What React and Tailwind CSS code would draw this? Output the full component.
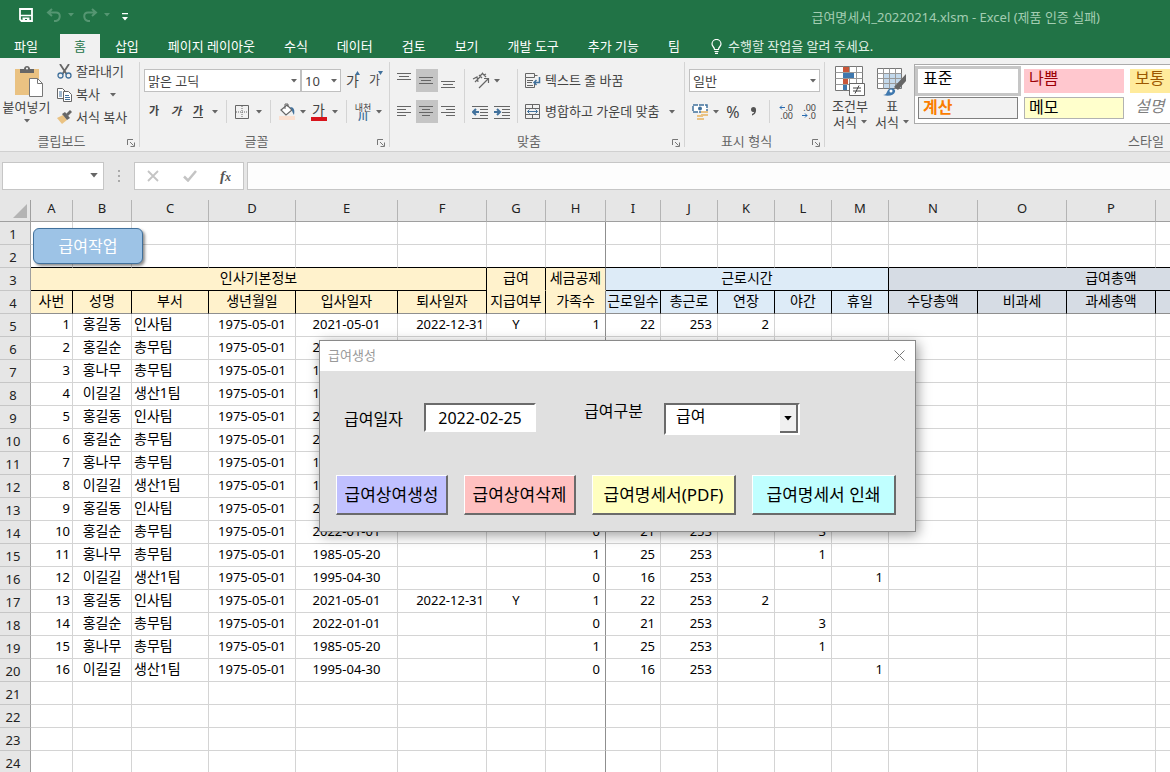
import React from 'react';

const tabs = ['삽입', '페이지 레이아웃', '수식', '데이터', '검토', '보기', '개발 도구', '추가 기능', '팀'];

const columns = [
  { name: 'A', width: 42 },
  { name: 'B', width: 59 },
  { name: 'C', width: 77 },
  { name: 'D', width: 87 },
  { name: 'E', width: 102 },
  { name: 'F', width: 89 },
  { name: 'G', width: 59 },
  { name: 'H', width: 60 },
  { name: 'I', width: 55 },
  { name: 'J', width: 57 },
  { name: 'K', width: 57 },
  { name: 'L', width: 57 },
  { name: 'M', width: 57 },
  { name: 'N', width: 89 },
  { name: 'O', width: 89 },
  { name: 'P', width: 89 },
  { name: 'Q', width: 89 },
  { name: 'R', width: 89 }
];

const people = [
  { name: '홍길동', team: '인사팀', joined: '2021-05-01', left: '2022-12-31', paid: 'Y', family: 1, days: 22, over: 2 },
  { name: '홍길순', team: '총무팀', joined: '2022-01-01', family: 0, days: 21, night: 3 },
  { name: '홍나무', team: '총무팀', joined: '1985-05-20', family: 1, days: 25, night: 1 },
  { name: '이길길', team: '생산1팀', joined: '1995-04-30', family: 0, days: 16, holiday: 1 }
];

const employees = Array.from({ length: 16 }, (_, i) => ({ id: i + 1, ...people[i % 4] }));

const subHeads = [
  { text: '사번', style: 'bg-[#fff2cc] border-r-black' },
  { text: '성명', style: 'bg-[#fff2cc] border-r-black' },
  { text: '부서', style: 'bg-[#fff2cc] border-r-black' },
  { text: '생년월일', style: 'bg-[#fff2cc] border-r-black' },
  { text: '입사일자', style: 'bg-[#fff2cc] border-r-black' },
  { text: '퇴사일자', style: 'bg-[#fff2cc] border-r-black' },
  { text: '지급여부', style: 'bg-[#fff2cc] border-r-black' },
  { text: '가족수', style: 'bg-[#fff2cc] border-r-[#7f7f7f]' },
  { text: '근로일수', style: 'bg-[#ddebf7] border-r-black' },
  { text: '총근로', style: 'bg-[#ddebf7] border-r-black' },
  { text: '연장', style: 'bg-[#ddebf7] border-r-black' },
  { text: '야간', style: 'bg-[#ddebf7] border-r-black' },
  { text: '휴일', style: 'bg-[#ddebf7] border-r-black' },
  { text: '수당총액', style: 'bg-[#d6dce4] border-r-black' },
  { text: '비과세', style: 'bg-[#d6dce4] border-r-black' },
  { text: '과세총액', style: 'bg-[#d6dce4] border-r-black' },
  { text: '', style: 'bg-[#d6dce4] border-r-black' },
  { text: '', style: 'bg-[#d6dce4] border-r-black' }
];

const Caret = ({ className = '' }) => (
  <svg width="6" height="4" viewBox="0 0 6 4" className={`shrink-0 fill-[#666] ${className}`}>
    <path d="M0 0h6L3 3.5z" />
  </svg>
);

const Separator = ({ className = '' }) => <div className={`w-px shrink-0 bg-[#d4d4d4] ${className}`}></div>;

const Launcher = () => (
  <svg width="8" height="8" viewBox="0 0 8 8" fill="none" stroke="#777">
    <path d="M.5 6V.5H6M3 3l3.500 3.500M7.500 3.500v4h-4" />
  </svg>
);

const Lines = ({ d, className = '' }) => (
  <svg width="15" height="15" viewBox="0 0 15 15" fill="none" stroke="#666" className={className}>
    <path d={d} />
  </svg>
);

const RibbonGroup = ({ title, className, children }) => (
  <section aria-label={title} className={`flex shrink-0 flex-col pt-1 ${className}`}>
    <div className="h-[70px]">{children}</div>
    <div className="flex h-[17px] items-center">
      <span className="flex-1 text-center text-[13px] leading-4 text-[#666]">{title}</span>
      <button aria-label={`${title} 설정`} className="w-4 pl-1 pt-1"><Launcher /></button>
    </div>
  </section>
);

const Combo = ({ label, value, className }) => (
  <div className={`relative h-[23px] ${className}`}>
    <select aria-label={label} className="block h-full w-full appearance-none border border-[#c0c0c0] bg-white pl-[3px] text-[13px] leading-5 text-[#444]">
      <option>{value}</option>
    </select>
    <Caret className="pointer-events-none absolute right-1 top-[10px]" />
  </div>
);

const TitleBar = () => (
  <header className="bg-[#217346] text-white">
    <div className="flex h-[34px] items-center">
      <button aria-label="저장" className="ml-[18px]">
        <svg width="16" height="16" viewBox="0 0 16 16" className="mb-1">
          <path d="M2 2h12v12H3.500L2 12.500z" fill="none" stroke="#fff" strokeWidth="1.800" />
          <path d="M2 8.500h12" fill="none" stroke="#fff" strokeWidth="1.500" />
          <path d="M4.500 10.500h7V14h-2.500v-2H7v2H4.500z" fill="#fff" />
        </svg>
      </button>
      <button aria-label="실행 취소" className="ml-3 mb-1 flex items-center gap-1.5">
        <svg width="16" height="14" viewBox="0 0 16 14" fill="none" stroke="#559672" strokeWidth="2">
          <path d="M6 1L2 4.500 6 8M2.500 4.500H10c5 0 5 7 0 8.500H8" />
        </svg>
        <Caret className="fill-[#559672]" />
      </button>
      <button aria-label="다시 실행" className="ml-2 mb-1 flex items-center gap-1.5">
        <svg width="16" height="14" viewBox="0 0 16 14" fill="none" stroke="#559672" strokeWidth="2">
          <path d="M10 1l4 3.500L10 8M13.500 4.500H6c-5 0-5 7 0 8.500h2" />
        </svg>
        <Caret className="fill-[#559672]" />
      </button>
      <button aria-label="빠른 실행 도구 모음" className="ml-3">
        <svg width="6" height="8" viewBox="0 0 6 8" fill="#fff">
          <path d="M0 0h6v1.300H0zM0 4h6L3 7.500z" />
        </svg>
      </button>
      <h1 className="ml-auto mr-[70px] text-[13px] leading-5 text-[#a3cdb2]">급여명세서_20220214.xlsm - Excel (제품 인증 실패)</h1>
    </div>
    <nav className="flex h-6 gap-px text-[13px] leading-5 whitespace-nowrap">
      <button className="mr-[7px] px-[14px]">파일</button>
      <button className="bg-[#f1f1f1] px-[14px] text-[#217346]">홈</button>
      {tabs.map(tab => (
        <button key={tab} className="px-[14px]">{tab}</button>
      ))}
      <button className="flex items-center gap-1.5 pl-4 text-[#e0f0e5]">
        <svg width="11" height="15" viewBox="0 0 11 15" fill="none" stroke="#fff" strokeWidth="1.200">
          <path d="M3.500 10.500C3.500 8 1 7.500 1 5a4.500 4.500 0 0 1 9 0c0 2.500-2.500 3-2.500 5.500zM3.500 12.500h4M4 14.300h3" />
        </svg>
        수행할 작업을 알려 주세요.
      </button>
    </nav>
  </header>
);

const Clipboard = () => (
  <RibbonGroup title="클립보드" className="w-[139px]">
    <div className="flex">
      <button className="flex w-[53px] flex-col items-center pt-1 text-[13px] leading-5 text-[#444]">
        <svg width="30" height="31" viewBox="0 0 30 31" className="ml-1">
          <path d="M1 3h24v26H1z" fill="#eac282" />
          <path d="M6 3h4c0-4 6-4 6 0h4v4H6z" fill="#666" />
          <circle cx="13" cy="2.500" r="1" fill="#fff" />
          <path d="M15.500 12.500h8l5 5v13h-13z" fill="#fff" stroke="#777" />
          <path d="M23.500 12.500v5h5" fill="none" stroke="#777" />
        </svg>
        붙여넣기
        <Caret className="mt-0.5" />
      </button>
      <div className="ml-1 flex flex-col text-[13px] leading-[23px] text-[#444]">
        <button className="flex h-[23px] -mt-0.5 items-center gap-1">
          <svg width="15" height="15" viewBox="0 0 15 15" fill="none">
            <path d="M3 0l6.500 10M12 0L5.500 10" stroke="#666" strokeWidth="1.800" />
            <circle cx="3.500" cy="11.500" r="2.500" stroke="#41719c" strokeWidth="1.300" />
            <circle cx="11.500" cy="11.500" r="2.500" stroke="#41719c" strokeWidth="1.300" />
          </svg>
          잘라내기
        </button>
        <button className="flex h-[23px] items-center gap-1">
          <svg width="15" height="15" viewBox="0 0 15 15" fill="#fff" stroke="#666">
            <path d="M.5 1.500h5l3 3v7h-8z" />
            <path d="M6.500 4.500h5l3 3v7h-8z" />
            <path d="M2 5h3M2 7h3M2 9h3M8 8.500h4M8 10.500h5M8 12.500h5" stroke="#41719c" />
          </svg>
          복사
          <Caret className="ml-1.5" />
        </button>
        <button className="flex h-[23px] items-center gap-1">
          <svg width="15" height="15" viewBox="0 0 15 15">
            <path d="M0 8l6-3 4 5-5 4z" fill="#eac282" />
            <path d="M5 4l3-2 5 6-3 2z" fill="#666" />
            <path d="M9 4l4-4 2 2-4 4z" fill="#666" />
          </svg>
          서식 복사
        </button>
      </div>
    </div>
  </RibbonGroup>
);

const FontGroup = () => (
  <RibbonGroup title="글꼴" className="w-[249px]">
    <div className="flex items-center pl-1 pt-[7px] text-[#444]">
      <Combo label="글꼴" value="맑은 고딕" className="w-[157px]" />
      <Combo label="글꼴 크기" value="10" className="w-10" />
      <button aria-label="글꼴 크기 크게" className="ml-[5px] flex w-[18px] text-[14px] leading-5">
        가<svg width="5" height="4" viewBox="0 0 5 4" fill="#41719c" className="-ml-1 shrink-0"><path d="M0 4L2.500 0 5 4z" /></svg>
      </button>
      <button aria-label="글꼴 크기 작게" className="ml-[5px] flex w-[18px] text-[12px] leading-5">
        가<svg width="5" height="4" viewBox="0 0 5 4" fill="#41719c" className="-ml-0.5 shrink-0"><path d="M0 0h5L2.500 4z" /></svg>
      </button>
    </div>
    <div className="mt-2 flex h-[23px] items-center pl-[3px] text-[#444]">
      <button className="w-[22px] text-[11px] font-bold">가</button>
      <button className="w-[22px] text-[11px] font-bold italic">가</button>
      <button className="w-[22px] text-[11px] font-bold underline underline-offset-2">가</button>
      <Caret className="ml-[3px]" />
      <Separator className="ml-2 h-[23px]" />
      <button aria-label="테두리" className="ml-2">
        <svg width="14" height="14" viewBox="0 0 14 14" fill="none" stroke="#666">
          <path d="M.5.5h13v13H.5z" />
          <path d="M7 1v12M1 7h12" strokeDasharray="1 1" />
        </svg>
      </button>
      <Caret className="ml-[7px]" />
      <Separator className="ml-2 h-[23px]" />
      <button aria-label="채우기 색" className="ml-2">
        <svg width="17" height="17" viewBox="0 0 17 17">
          <path d="M2 7l6-5 5 5-6 5z" fill="#fff" stroke="#666" strokeWidth="1.200" />
          <path d="M6 6V1h3v3" fill="none" stroke="#666" />
          <path d="M11 4c4 0 5 3 4 8-1-2-2-3-2-5z" fill="#41719c" />
          <path d="M0 13h16v4H0z" fill="#fbe0d0" />
        </svg>
      </button>
      <Caret className="ml-1" />
      <button aria-label="글꼴 색" className="ml-1 flex w-[17px] flex-col items-center text-[14px] leading-[14px]">
        가<span className="h-1 w-4 bg-[#d8141c]"></span>
      </button>
      <Caret className="ml-[5px]" />
      <Separator className="ml-2 h-[23px]" />
      <button aria-label="윗주" className="ml-2 flex w-4 flex-col items-center text-[9px] leading-[9px] whitespace-nowrap">
        내천
        <span className="text-[10px] leading-[9px] font-bold text-[#41719c]">川</span>
      </button>
      <Caret className="ml-[5px]" />
    </div>
  </RibbonGroup>
);

const AlignGroup = () => (
  <RibbonGroup title="맞춤" className="w-[294px]">
    <div className="flex pl-1 pt-[7px] text-[13px] leading-[23px] text-[#444]">
      <div className="grid grid-cols-3 gap-y-2">
        <button aria-label="위쪽 맞춤" className="h-[23px] w-[22px] pl-[3px]"><Lines d="M0 .5h14M2 3.500h10M0 6.500h14" /></button>
        <button aria-label="세로 가운데 맞춤" className="h-[23px] w-[22px] bg-[#c5c5c5] pl-[3px]"><Lines d="M0 4.500h14M2 7.500h10M0 10.500h14" /></button>
        <button aria-label="아래쪽 맞춤" className="h-[23px] w-[22px] pl-[3px]"><Lines d="M0 8.500h14M2 11.500h10M0 14.500h14" /></button>
        <button aria-label="왼쪽 맞춤" className="h-[23px] w-[22px] pl-[3px]"><Lines d="M0 2.500h14M0 5.500h9M0 8.500h14M0 11.500h9" /></button>
        <button aria-label="가운데 맞춤" className="h-[23px] w-[22px] bg-[#c5c5c5] pl-[3px]"><Lines d="M0 2.500h14M3 5.500h8M0 8.500h14M3 11.500h8" /></button>
        <button aria-label="오른쪽 맞춤" className="h-[23px] w-[22px] pl-[3px]"><Lines d="M0 2.500h14M5 5.500h9M0 8.500h14M5 11.500h9" /></button>
      </div>
      <Separator className="ml-1" />
      <div className="ml-[7px] flex w-[45px] flex-col gap-2">
        <button aria-label="방향" className="flex h-[23px] items-center gap-1">
          <svg width="18" height="17" viewBox="0 0 18 17" fill="none" stroke="#666" strokeWidth="1.200">
            <path d="M7 16l9-9M12 6.500h4.500V11" />
            <path d="M1 7l4-2 1 5M3 10l5-5M7 3l3 3M8 4l3-3M10 1l4 4M12 3l2-1" />
          </svg>
          <Caret />
        </button>
        <div className="flex h-[23px] items-center gap-1.5">
          <button aria-label="내어쓰기">
            <svg width="16" height="14" viewBox="0 0 16 14" fill="none" stroke="#666">
              <path d="M0 1.500h16M8 4.500h8M8 7.500h8M8 10.500h8M0 13.500h16" />
              <path d="M7 7H1.500M4 4L1 7l3 3" stroke="#41719c" strokeWidth="2" />
            </svg>
          </button>
          <button aria-label="들여쓰기">
            <svg width="16" height="14" viewBox="0 0 16 14" fill="none" stroke="#666">
              <path d="M0 1.500h16M8 4.500h8M8 7.500h8M8 10.500h8M0 13.500h16" />
              <path d="M0 7h5.500M3 4l3 3-3 3" stroke="#41719c" strokeWidth="2" />
            </svg>
          </button>
        </div>
      </div>
      <Separator />
      <div className="ml-[7px] flex flex-col gap-2">
        <button className="flex h-[23px] items-center gap-1">
          <svg width="16" height="16" viewBox="0 0 16 16" fill="none" stroke="#666">
            <path d="M.5.5h9v4h-9zM.5 4.500v10h9v-4M9.500 2.500h3M2 7.500h6M2 9.500h5M2 12.500h6" />
            <path d="M14.500 4v5.500H9M11.500 7L9 9.500l2.500 2.500" stroke="#41719c" strokeWidth="1.500" />
          </svg>
          텍스트 줄 바꿈
        </button>
        <button className="flex h-[23px] items-center gap-1">
          <svg width="16" height="16" viewBox="0 0 16 16" fill="none" stroke="#666">
            <path d="M.5.5h14v14H.5zM.5 4.500h14M.5 10.500h14M7.500.5v4M7.500 10.500v4" />
            <path d="M2.500 7.500h10M4.500 5.500l-2 2 2 2M10.500 5.500l2 2-2 2" stroke="#41719c" />
          </svg>
          병합하고 가운데 맞춤
          <Caret className="ml-1.5" />
        </button>
      </div>
    </div>
  </RibbonGroup>
);

const NumberGroup = () => (
  <RibbonGroup title="표시 형식" className="w-[139px]">
    <div className="pl-1 pt-[7px]">
      <Combo label="표시 형식" value="일반" className="w-[131px]" />
    </div>
    <div className="mt-2 flex h-[23px] items-center pl-[7px] text-[#444]">
      <button aria-label="회계 표시 형식">
        <svg width="17" height="16" viewBox="0 0 17 16">
          <path d="M1 1h14v7H1z" fill="#fff" stroke="#41719c" strokeWidth="1.500" strokeDasharray="5 1" />
          <circle cx="8" cy="4.500" r="2" fill="#41719c" />
          <path d="M9 7h7v2H9zM9 10h7v2H9zM5 11h6v2H5zM5 14h7v2H5z" fill="#eac282" />
        </svg>
      </button>
      <Caret className="ml-1" />
      <button className="ml-1.5 w-4 text-[16px] leading-5">%</button>
      <button aria-label="쉼표 스타일" className="ml-2.5">
        <svg width="6" height="9" viewBox="0 0 6 9" fill="#555"><path d="M0 2.500a2.500 2.500 0 0 1 5 0C5.500 6 3 8 1 8.500V7c1-.5 2-1 2-2H2C.8 5 0 4 0 2.500z" /></svg>
      </button>
      <Separator className="ml-3 h-[23px]" />
      <button aria-label="자릿수 늘림" className="ml-1.5 flex w-[17px] flex-col items-end text-[9px] leading-[8px]">
        <span className="flex items-center">
          <svg width="6" height="5" viewBox="0 0 6 5" fill="none" stroke="#2b6cb0"><path d="M6 2.500H1M3 .5l-2 2 2 2" /></svg>.0
        </span>
        <span>.00</span>
      </button>
      <button aria-label="자릿수 줄임" className="ml-1.5 flex w-[17px] flex-col items-end text-[9px] leading-[8px]">
        <span>.00</span>
        <span className="flex items-center">
          <svg width="6" height="5" viewBox="0 0 6 5" fill="none" stroke="#2b6cb0"><path d="M0 2.500h5M3 .5l2 2-2 2" /></svg>.0
        </span>
      </button>
    </div>
  </RibbonGroup>
);

const StyleGroup = () => (
  <RibbonGroup title="스타일" className="w-[658px]">
    <div className="flex items-start pl-1 text-[13px] text-[#444]">
      <button className="flex w-[42px] flex-col items-center pt-1 leading-4">
        <svg width="30" height="31" viewBox="0 0 30 31">
          <path d="M.5.5h27v24H.5z" fill="#fff" stroke="#777" />
          <path d="M.5 6.500h27M.5 12.500h27M.5 18.500h27M8.500.5v24M14.500.5v24M21.500.5v24" stroke="#999" />
          <path d="M8 1h6v5H8zM8 13h5v5H8z" fill="#c9573a" />
          <path d="M8 7h11v5H8zM8 19h4v5H8z" fill="#3f78ae" />
          <path d="M14.500 17.500h15v12h-15z" fill="#fff" stroke="#666" />
          <path d="M18 22h8M18 25h8M24 19.500l-4 8" stroke="#444" fill="none" />
        </svg>
        <span className="pt-px">조건부</span>
        <span className="flex items-center gap-1">서식 <Caret /></span>
      </button>
      <button className="flex w-[42px] flex-col items-center pt-1 leading-4">
        <svg width="30" height="31" viewBox="0 0 30 31">
          <path d="M.5 2.500h24v20H.5z" fill="#fff" stroke="#777" />
          <path d="M7 8h17v14H7z" fill="#c3d9ec" />
          <path d="M.5 7.500h24M.5 12.500h24M.5 17.500h24M6.500 2.500v20M12.500 2.500v20M18.500 2.500v20" stroke="#999" />
          <path d="M29 8v7l-8 9-4-3z" fill="#666" />
          <path d="M6 29c4 0 3-3 6-6 3-2 7 0 6 3s-6 5-12 3z" fill="#3f78ae" />
          <circle cx="14" cy="25" r="1.500" fill="#fff" />
        </svg>
        <span className="pt-px">표</span>
        <span className="flex items-center gap-1">서식 <Caret /></span>
      </button>
      <div className="mt-0.5 ml-px flex-1 border border-[#ababab] bg-white py-1 pl-[3px] text-[16px]">
        <div className="grid grid-cols-[repeat(5,100px)] gap-x-1.5 gap-y-1 leading-[18px]">
          <button className="flex h-6 items-start bg-white pl-[5px] text-black outline-3 outline-[#c6c6c6]">표준</button>
          <button className="flex h-6 items-start bg-[#ffc7ce] pl-[5px] text-[#9c0006]">나쁨</button>
          <button className="flex h-6 items-start bg-[#ffeb9c] pl-[5px] text-[#9c5700]">보통</button>
          <span className="col-span-2"></span>
          <button className="flex h-[22px] items-start border border-[#7f7f7f] bg-[#f2f2f2] pl-1 font-bold text-[#fa7d00]">계산</button>
          <button className="flex h-[22px] items-start border border-[#b2b2b2] bg-[#ffffcc] pl-1 text-black">메모</button>
          <button className="flex h-[22px] items-start pl-[5px] italic text-[#7f7f7f]">설명</button>
        </div>
      </div>
    </div>
  </RibbonGroup>
);

const FormulaBar = () => (
  <div className="flex items-stretch bg-[#e6e6e6] py-2.5 pl-0.5">
    <div className="relative h-7 w-[102px]">
      <input aria-label="이름 상자" className="block h-full w-full border border-[#c6c6c6] bg-white px-1 text-[13px]" />
      <Caret className="absolute right-1.5 top-[11px] h-[5px] w-2" />
    </div>
    <svg width="30" height="28" viewBox="0 0 30 28" fill="#aaa">
      <path d="M14 8h2v2h-2zM14 13h2v2h-2zM14 18h2v2h-2z" />
    </svg>
    <div className="flex w-[110px] items-center justify-between border border-[#c6c6c6] bg-white px-3">
      <button aria-label="취소">
        <svg width="12" height="12" viewBox="0 0 12 12" fill="none" stroke="#c4c4c4" strokeWidth="1.800"><path d="M1 1l10 10M11 1L1 11" /></svg>
      </button>
      <button aria-label="입력">
        <svg width="14" height="12" viewBox="0 0 14 12" fill="none" stroke="#c4c4c4" strokeWidth="2.500"><path d="M1 6.500L5 10.500 13 1" /></svg>
      </button>
      <button className="font-[Liberation_Serif] text-[15px] leading-5 font-bold italic text-[#555]">f<span className="text-[12px]">x</span></button>
    </div>
    <input aria-label="수식 입력줄" className="ml-[3px] min-w-0 flex-1 border border-r-0 border-[#c6c6c6] bg-[#fdfdfd] px-2 text-[13px]" />
  </div>
);

const RowHead = ({ n }) => (
  <th scope="row" className="h-[23px] border-r border-b border-r-[#9f9f9f] border-b-[#c6c6c6] bg-[#e6e6e6] p-0 pt-0.5 pr-1 text-center text-[13px] leading-5 font-normal text-[#222]">
    {n}
  </th>
);

const EmptyRow = ({ n, line }) => (
  <tr>
    <RowHead n={n} />
    {columns.map(col => (
      <td
        key={col.name}
        className={`border-r border-b p-0 ${line} ${col.name === 'H' ? 'border-r-[#8f8f8f]' : 'border-r-[#d4d4d4]'}`}
      ></td>
    ))}
  </tr>
);

const EmployeeRow = ({ n, item }) => {
  const cell = 'border-r border-b border-[#d4d4d4] p-0 pb-0.5 leading-5 whitespace-nowrap';
  return (
    <tr>
      <RowHead n={n} />
      <td className={`${cell} pr-0.5 text-right`}>{item.id}</td>
      <td className={`${cell} text-center text-[14px]`}>{item.name}</td>
      <td className={`${cell} pl-0.5 text-[14px]`}>{item.team}</td>
      <td className={`${cell} text-center`}>1975-05-01</td>
      <td className={`${cell} text-center`}>{item.joined}</td>
      <td className={`${cell} pr-0.5 text-right`}>{item.left}</td>
      <td className={`${cell} text-center`}>{item.paid}</td>
      <td className={`${cell} border-r-[#8f8f8f] pr-[5px] text-right`}>{item.family}</td>
      <td className={`${cell} pr-[5px] text-right`}>{item.days}</td>
      <td className={`${cell} pr-[5px] text-right`}>253</td>
      <td className={`${cell} pr-[5px] text-right`}>{item.over}</td>
      <td className={`${cell} pr-[5px] text-right`}>{item.night}</td>
      <td className={`${cell} pr-[5px] text-right`}>{item.holiday}</td>
      <td className={cell}></td>
      <td className={cell}></td>
      <td className={cell}></td>
      <td className={cell}></td>
      <td className={cell}></td>
    </tr>
  );
};

const Sheet = () => (
  <table className="w-[1334px] table-fixed border-separate border-spacing-0 text-[13px] text-black">
    <colgroup>
      <col style={{ width: 31 }} />
      {columns.map(col => <col key={col.name} style={{ width: col.width }} />)}
    </colgroup>
    <thead>
      <tr>
        <th className="h-[22px] border-r border-b border-[#9f9f9f] bg-[#e6e6e6] p-0">
          <svg width="14" height="14" viewBox="0 0 14 14" className="ml-[13px]"><path d="M14 0v14H0z" fill="#b4b4b4" /></svg>
        </th>
        {columns.map(col => (
          <th key={col.name} scope="col" className="h-[22px] border-r border-b border-r-[#b4b4b4] border-b-[#9f9f9f] bg-[#e6e6e6] p-0 pb-[5px] text-center leading-4 font-normal text-[#222]">
            {col.name}
          </th>
        ))}
      </tr>
    </thead>
    <tbody>
      <EmptyRow n={1} line="border-b-[#d4d4d4]" />
      <EmptyRow n={2} line="border-b-black" />
      <tr className="text-[14px] leading-5">
        <RowHead n={3} />
        <td colSpan={6} className="border-r border-b border-black bg-[#fff2cc] p-0 pb-0.5 text-center">인사기본정보</td>
        <td className="border-r border-b border-r-black border-b-[#fff2cc] bg-[#fff2cc] p-0 pb-0.5 text-center">급여</td>
        <td className="border-r border-b border-r-[#7f7f7f] border-b-[#fff2cc] bg-[#fff2cc] p-0 pb-0.5 text-center whitespace-nowrap">세금공제</td>
        <td colSpan={5} className="border-r border-b border-black bg-[#ddebf7] p-0 pb-0.5 text-center">근로시간</td>
        <td colSpan={5} className="border-r border-b border-black bg-[#d6dce4] p-0 pb-0.5 text-center">급여총액</td>
      </tr>
      <tr className="text-[14px] leading-5">
        <RowHead n={4} />
        {subHeads.map((head, index) => (
          <td key={index} className={`border-r border-b border-b-[#8f8f8f] p-0 pb-0.5 text-center whitespace-nowrap ${head.style}`}>{head.text}</td>
        ))}
      </tr>
      {employees.map(item => <EmployeeRow key={item.id} n={item.id + 4} item={item} />)}
      {[21, 22, 23, 24].map(n => <EmptyRow key={n} n={n} line="border-b-[#d4d4d4]" />)}
    </tbody>
  </table>
);

const bevel = 'h-10 border border-r-2 border-b-2 border-t-white border-l-white border-r-[#6b6b6b] border-b-[#6b6b6b] text-[17px] leading-6 whitespace-nowrap text-black';

const PayrollDialog = () => (
  <div role="dialog" aria-labelledby="payroll-title" className="absolute top-[140px] left-[319px] w-[597px] border border-[#8a8a8a] bg-[#e0e0e0] shadow-[2px_3px_12px_rgba(0,0,0,0.4)]">
    <div className="flex h-[30px] items-center justify-between bg-white pr-2.5 pb-0.5 pl-2">
      <h2 id="payroll-title" className="text-[13px] leading-5 text-[#999]">급여생성</h2>
      <button aria-label="닫기">
        <svg width="11" height="11" viewBox="0 0 11 11" fill="none" stroke="#777"><path d="M.5.5l10 10M10.500.5l-10 10" /></svg>
      </button>
    </div>
    <form className="px-4 pt-8 pb-4" onSubmit={e => e.preventDefault()}>
      <div className="flex h-[72px] items-start pl-2 text-[16px] leading-6 text-black">
        <label htmlFor="pay-date" className="w-20 pt-1">급여일자</label>
        <input
          id="pay-date"
          defaultValue="2022-02-25"
          className="h-[29px] w-28 border-2 border-t-[#6b6b6b] border-r-white border-b-white border-l-[#6b6b6b] bg-white text-center"
        />
        <label htmlFor="pay-type" className="-mt-1 ml-12 w-20">급여구분</label>
        <div className="relative h-8 w-[136px] border-2 border-t-[#6b6b6b] border-r-white border-b-white border-l-[#6b6b6b] bg-white">
          <select id="pay-type" className="block h-[22px] w-full appearance-none pl-2.5 leading-5">
            <option>급여</option>
          </select>
          <span className="pointer-events-none absolute top-0 right-0 flex h-7 w-[18px] items-center justify-center border-r-2 border-b-2 border-[#6b6b6b] bg-[#f0f0f0]">
            <Caret className="h-[5px] w-2 fill-black" />
          </span>
        </div>
      </div>
      <div className="flex gap-4">
        <button className={`w-28 bg-[#c0c0ff] ${bevel}`}>급여상여생성</button>
        <button className={`w-28 bg-[#ffc0c0] ${bevel}`}>급여상여삭제</button>
        <button className={`w-36 bg-[#ffffc0] ${bevel}`}>급여명세서(PDF)</button>
        <button className={`w-36 bg-[#c0ffff] ${bevel}`}>급여명세서 인쇄</button>
      </div>
    </form>
  </div>
);

const App = () => {
  return (
    <div className="flex h-screen flex-col overflow-hidden bg-white font-['Noto_Sans','Noto_Sans_CJK_KR',sans-serif]">
      <TitleBar />
      <div className="flex h-[94px] shrink-0 overflow-hidden border-b border-[#d0d0d0] bg-[#f1f1f1]">
        <Clipboard />
        <Separator className="my-1" />
        <FontGroup />
        <Separator className="my-1" />
        <AlignGroup />
        <Separator className="my-1" />
        <NumberGroup />
        <Separator className="my-1" />
        <StyleGroup />
      </div>
      <FormulaBar />
      <main className="relative min-h-0 flex-1 overflow-hidden">
        <Sheet />
        <button className="absolute top-7 left-[33px] h-9 w-[110px] rounded-md border border-[#41719c] bg-[#9dc3e6] text-[16px] leading-6 text-white shadow-[2px_2px_3px_rgba(0,0,0,0.45)]">
          급여작업
        </button>
        <PayrollDialog />
      </main>
    </div>
  );
};

export default App;
